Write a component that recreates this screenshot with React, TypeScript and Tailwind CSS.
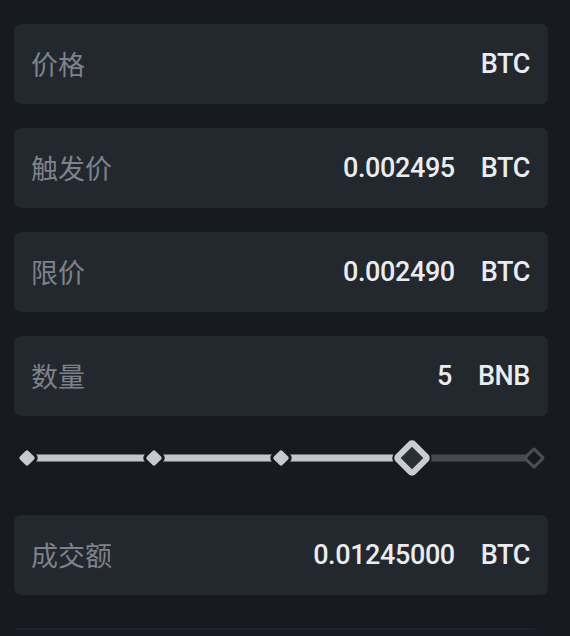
import React from "react"

type Row = { label: string; value?: string; unit: string }

function Field({ label, value, unit }: Row) {
  return (
    <div className="h-[80px] rounded-[7px] bg-[#23272e] flex items-center justify-between pl-[17px] pr-[18px]">
      <span className="text-[27px] text-[#7e828a] font-['Noto_Sans_CJK_SC',sans-serif] leading-none -mt-[2px]">{label}</span>
      <div className="flex items-center gap-[26px] text-[27px] font-medium tracking-[-0.4px] text-[#eaecef] font-['Roboto',sans-serif] leading-none">
        {value && <span>{value}</span>}
        <span>{unit}</span>
      </div>
    </div>
  )
}

function Slider() {
  return (
    <div className="mt-[22px] mb-[37px] h-[40px] ml-[13px] mr-[14px] relative">
      {/* track */}
      <div className="absolute top-1/2 -translate-y-1/2 left-0 w-[385px] h-[7px] bg-[#c3c6cb]" />
      <div className="absolute top-1/2 -translate-y-1/2 left-[385px] right-0 h-[7px] bg-[#46494f]" />
      {/* steps */}
      <div className="absolute top-1/2 left-0 -translate-x-1/2 -translate-y-1/2 rotate-45 w-[12px] h-[12px] rounded-[2px] bg-[#c6c9ce] ring-[3px] ring-[#171a21]" />
      <div className="absolute top-1/2 left-[127px] -translate-x-1/2 -translate-y-1/2 rotate-45 w-[12px] h-[12px] rounded-[2px] bg-[#c6c9ce] ring-[3px] ring-[#171a21]" />
      <div className="absolute top-1/2 left-[254px] -translate-x-1/2 -translate-y-1/2 rotate-45 w-[12px] h-[12px] rounded-[2px] bg-[#c6c9ce] ring-[3px] ring-[#171a21]" />
      <div className="absolute top-1/2 left-[507px] -translate-x-1/2 -translate-y-1/2 rotate-45 w-[16px] h-[16px] rounded-[2px] border-[3px] border-[#4a4d53] bg-[#171a21]" />
      {/* handle */}
      <div className="absolute top-1/2 left-[385px] -translate-x-1/2 -translate-y-1/2 rotate-45 w-[28px] h-[28px] rounded-[5px] border-[6px] border-[#c9ccd1] bg-[#2a2e35] ring-[2px] ring-[#171a21]" />
    </div>
  )
}

export default function App() {
  return (
    <div className="w-[570px] h-[636px] overflow-hidden bg-[#171a21] pl-[14px] pr-[22px] pt-[24px]">
      <div className="flex flex-col gap-[24px]">
        <Field label="价格" unit="BTC" />
        <Field label="触发价" value="0.002495" unit="BTC" />
        <Field label="限价" value="0.002490" unit="BTC" />
        <Field label="数量" value="5" unit="BNB" />
      </div>
      <Slider />
      <Field label="成交额" value="0.01245000" unit="BTC" />
      <div className="mt-[33px] mr-[13px] h-[2px] rounded-full bg-[#1e222a]" />
    </div>
  )
}
